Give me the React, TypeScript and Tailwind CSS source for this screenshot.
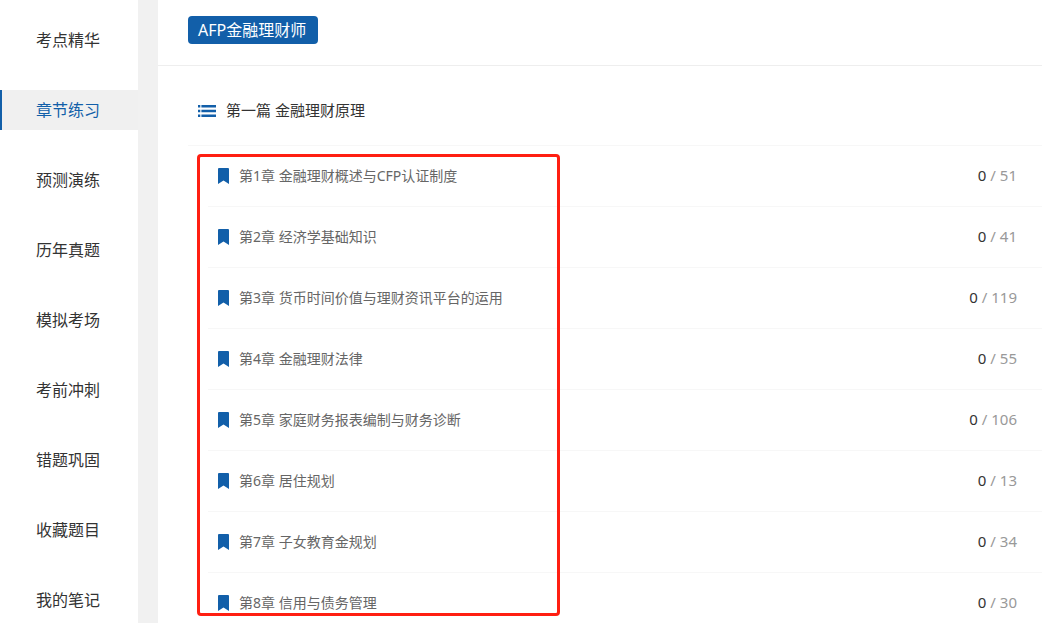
const NAV_ITEMS = [
  "考点精华", "章节练习", "预测演练", "历年真题", "模拟考场",
  "考前冲刺", "错题巩固", "收藏题目", "我的笔记",
];

const CHAPTERS = [
  { title: "第1章 金融理财概述与CFP认证制度", done: 0, total: 51 },
  { title: "第2章 经济学基础知识", done: 0, total: 41 },
  { title: "第3章 货币时间价值与理财资讯平台的运用", done: 0, total: 119 },
  { title: "第4章 金融理财法律", done: 0, total: 55 },
  { title: "第5章 家庭财务报表编制与财务诊断", done: 0, total: 106 },
  { title: "第6章 居住规划", done: 0, total: 13 },
  { title: "第7章 子女教育金规划", done: 0, total: 34 },
  { title: "第8章 信用与债务管理", done: 0, total: 30 },
];

function ListIcon() {
  return (
    <svg width="18" height="12" viewBox="0 0 18 12" fill="#125fa9" className="shrink-0" aria-hidden="true">
      <path d="M0 0h2.3v2.4H0zM3.4 0H18v2.4H3.4zM0 4.7h2.3v2.6H0zM3.4 4.7H18v2.6H3.4zM0 9.6h2.3V12H0zM3.4 9.6H18V12H3.4z" />
    </svg>
  );
}

function BookmarkIcon() {
  return (
    <svg width="11" height="16" viewBox="0 0 11 16" fill="#125fa9" className="shrink-0" aria-hidden="true">
      <path d="M1 0h9a1 1 0 0 1 1 1v15l-5.5-3.6L0 16V1a1 1 0 0 1 1-1z" />
    </svg>
  );
}

function Sidebar({ active }: { active: string }) {
  return (
    <nav className="flex w-[138px] shrink-0 flex-col gap-[30px] bg-white pt-5">
      {NAV_ITEMS.map((item) => (
        <a
          key={item}
          href="#"
          className={
            item === active
              ? "border-l-2 border-[#125fa9] bg-[#f0f0f0] pl-[34px] text-base leading-10 text-[#125fa9]"
              : "border-l-2 border-transparent pl-[34px] text-base leading-10 text-[#333]"
          }
        >
          {item}
        </a>
      ))}
    </nav>
  );
}

export default function App() {
  return (
    <div className="flex h-screen gap-5 overflow-hidden bg-[#f1f1f1] font-['Noto_Sans','Noto_Sans_CJK_SC',sans-serif]">
      <Sidebar active="章节练习" />
      <main className="min-w-0 flex-1 bg-white">
        <header className="border-b border-[#eee] px-[30px] pt-4 pb-[21px]">
          <button type="button" className="block h-7 min-w-[130px] rounded bg-[#125fa9] px-[10px] text-left text-base leading-7 text-white">
            AFP金融理财师
          </button>
        </header>
        <section className="pl-[30px]">
          <h2 className="flex h-20 items-center gap-[10px] border-b border-[#f7f7f7] pt-[10px] pl-[10px] text-[15px] text-[#333]">
            <ListIcon />
            第一篇 金融理财原理
          </h2>
          <div className="relative pl-5">
            <ul>
              {CHAPTERS.map((c) => (
                <li key={c.title} className="border-b border-[#f7f7f7]">
                  <a href="#" className="flex h-[60px] items-center gap-[10px] pr-[25px] pl-[10px] text-sm text-[#666]">
                    <BookmarkIcon />
                    <span className="flex-1">{c.title}</span>
                    <span className="text-[15px] text-[#999]">
                      <span className="text-[#333]">{c.done}</span> / {c.total}
                    </span>
                  </a>
                </li>
              ))}
            </ul>
            {/* highlight frame around the chapter names */}
            <div className="pointer-events-none absolute top-2 left-[9px] h-[462px] w-[363px] rounded border-3 border-[#ff1f12]" />
          </div>
        </section>
      </main>
    </div>
  );
}
